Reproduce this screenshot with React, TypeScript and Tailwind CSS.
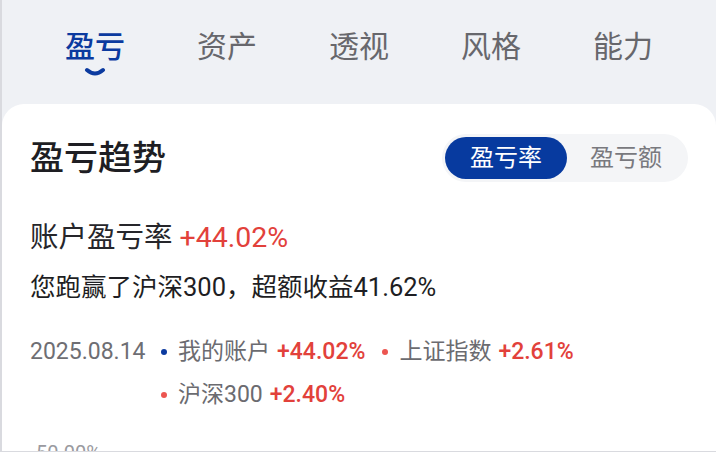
import React from "react";

const FONT = 'Roboto, "Noto Sans CJK SC", "Noto Sans", sans-serif';

function LegendItem({ color, label, value }: { color: string; label: string; value: string }) {
  return (
    <div className="flex items-center">
      <span className="w-[6px] h-[6px] rounded-full" style={{ backgroundColor: color }} />
      <span className="ml-[11px] text-[#6b6b70]">{label}</span>
      <span className="ml-[7px] text-[#e2413b] font-medium">{value}</span>
    </div>
  );
}

export default function App() {
  const tabs = ["盈亏", "资产", "透视", "风格", "能力"];
  return (
    <div
      className="w-[716px] h-[452px] overflow-hidden bg-[#eff1f5] border-l-[2px] border-b border-[#d9dadf] flex flex-col"
      style={{ fontFamily: FONT }}
    >
      <div className="shrink-0 flex pl-[63px] gap-[72px] pt-[29px] h-[104px]">
        {tabs.map((t, i) => (
          <div key={t} className="flex flex-col items-center">
            <span
              className={
                "text-[30px] leading-[36px] " +
                (i === 0 ? "text-[#0b3a9f] font-medium" : "text-[#67676c]")
              }
            >
              {t}
            </span>
            {i === 0 && (
              <svg width="22" height="10" viewBox="0 0 22 10" className="mt-[2px]">
                <path d="M3 3 Q11 10 19 3" fill="none" stroke="#0b3a9f" strokeWidth="4" strokeLinecap="round" />
              </svg>
            )}
          </div>
        ))}
      </div>

      <div className="flex-1 min-h-0 bg-white rounded-t-[22px] pl-[28px] pr-[28px] pt-[30px]">
        <div className="flex items-center justify-between h-[48px]">
          <span className="text-[34px] leading-[48px] font-medium text-[#1e1e23]">盈亏趋势</span>
          <div className="flex bg-[#f4f5f7] rounded-full p-[3px] w-[246px]">
            <div className="w-[122px] h-[42px] rounded-full bg-[#073a9f] text-white text-[24px] flex items-center justify-center">
              盈亏率
            </div>
            <div className="flex-1 h-[42px] text-[#79797e] text-[24px] flex items-center justify-center">
              盈亏额
            </div>
          </div>
        </div>

        <div className="mt-[38px] text-[28.5px] leading-[36px] text-[#26262b]">
          账户盈亏率 <span className="text-[#e2413b]">+44.02%</span>
        </div>
        <div className="mt-[13px] text-[25.5px] leading-[36px] text-[#1e1e23]">
          您跑赢了沪深300，超额收益41.62%
        </div>

        <div className="mt-[30px] flex text-[23px] leading-[34px]">
          <span className="text-[#6e6e73] w-[131px]">2025.08.14</span>
          <div className="flex flex-wrap w-[440px] gap-x-[17px] gap-y-[9px]">
            <LegendItem color="#0b3a9f" label="我的账户" value="+44.02%" />
            <LegendItem color="#ec5550" label="上证指数" value="+2.61%" />
            <LegendItem color="#ec5550" label="沪深300" value="+2.40%" />
          </div>
        </div>

        <div className="mt-[29px] ml-[6px] text-[20px] leading-[24px] text-[#9a9aa0]">50.00%</div>
      </div>
    </div>
  );
}
